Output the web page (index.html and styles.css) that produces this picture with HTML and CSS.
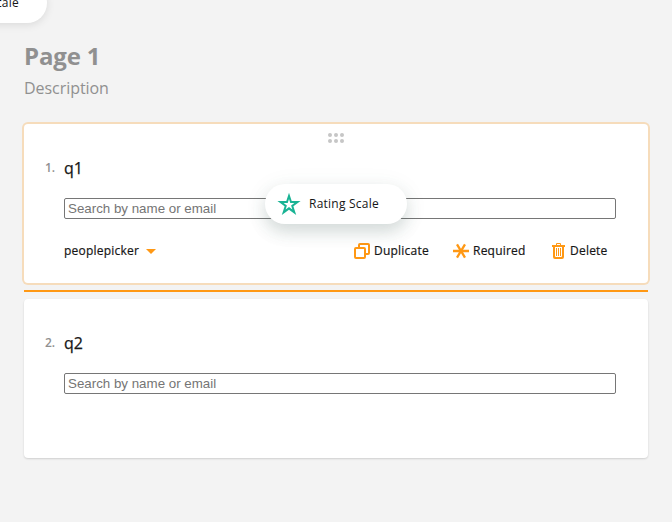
FILE: index.html
```html
<!DOCTYPE html>
<html lang="en">
<head>
<meta charset="utf-8">
<title>Survey designer</title>
<link rel="stylesheet" href="styles.css">
</head>
<body>
<main class="page">
  <h1 class="page-title">Page 1</h1>
  <p class="page-description">Description</p>

  <section class="question question--selected">
    <svg class="drag-handle" width="16" height="10" viewBox="0 0 16 10"><g fill="#c6c6c6"><circle cx="2" cy="2" r="2"/><circle cx="8" cy="2" r="2"/><circle cx="14" cy="2" r="2"/><circle cx="2" cy="8" r="2"/><circle cx="8" cy="8" r="2"/><circle cx="14" cy="8" r="2"/></g></svg>
    <header class="question-header"><span class="number">1.</span><h2 class="question-title">q1</h2></header>
    <input class="picker" type="text" placeholder="Search by name or email">
    <footer class="actions">
      <div class="action action--type"><span>peoplepicker</span><svg width="10" height="5" viewBox="0 0 10 5"><path d="M0 0h10L5 5z" fill="#ff9814"/></svg></div>
      <div class="action action--duplicate"><svg width="16" height="16" viewBox="0 0 16 16" fill="none" stroke="#ff9814" stroke-width="2"><path d="M5 5V2a1 1 0 0 1 1-1h8a1 1 0 0 1 1 1v8a1 1 0 0 1-1 1h-3"/><rect x="1" y="5" width="10" height="10" rx="1"/></svg><span>Duplicate</span></div>
      <div class="action action--required"><svg width="16" height="16" viewBox="0 0 16 16" fill="none" stroke="#ff9814" stroke-width="2.3"><path d="M0 8h16M4 1.4l8 13.2M12 1.4L4 14.6"/></svg><span>Required</span></div>
      <div class="action action--delete"><svg width="13" height="16" viewBox="0 0 13 16" fill="#ff9814"><path fill-rule="evenodd" d="M4 2V1a1 1 0 0 1 1-1h3a1 1 0 0 1 1 1v1h4v2h-1v10a2 2 0 0 1-2 2H3a2 2 0 0 1-2-2V4H0V2zM5 1v1h3V1zM3 4v9a1 1 0 0 0 1 1h5a1 1 0 0 0 1-1V4z"/><path d="M4 5h1v8H4zM6 5h1v8H6zM8 5h1v8H8z"/></svg><span>Delete</span></div>
    </footer>
  </section>

  <div class="drop-line"></div>

  <section class="question">
    <header class="question-header"><span class="number">2.</span><h2 class="question-title">q2</h2></header>
    <input class="picker" type="text" placeholder="Search by name or email">
  </section>
</main>

<div class="chip chip--toolbox">Rating Scale</div>
<div class="chip chip--dragged">
  <svg width="24" height="24" viewBox="0 0 24 24"><path d="M12 .7l2.7 8.3h8.9l-7.2 5.300 2.800 8.700-7.200-5.300L4.800 23l2.800-8.700L.4 9h8.900zM12 7l-1.300 4H6.600l3.300 2.500-1.300 4.100 3.400-2.500 3.400 2.500-1.300-4.100 3.300-2.500h-4.100z" fill="#19b394" fill-rule="evenodd"/></svg>
  <span>Rating Scale</span>
</div>
</body>
</html>
```
FILE: styles.css
```css
* { box-sizing: border-box; }

body {
  margin: 0;
  height: 522px;
  overflow: hidden;
  background: #f3f3f3;
  color: #161616;
  font-family: "Open Sans", sans-serif;
  font-size: 12px;
  line-height: 16px;
}

.page { padding: 40px 24px 0; }

.page-title {
  margin: 0;
  color: #909090;
  font-size: 24px;
  font-weight: 700;
  line-height: 32px;
  letter-spacing: -0.15px;
}

.page-description {
  margin: 4px 0 24px;
  color: #909090;
  font-size: 16px;
  line-height: 24px;
  letter-spacing: -0.05px;
}

.question {
  display: flex;
  flex-direction: column;
  height: 159px;
  padding: 32px 32px 0 20px;
  border-radius: 4px;
  background: #fff;
  box-shadow: 0 1px 2px rgba(0, 0, 0, 0.15);
}

.question--selected {
  padding-top: 9px;
  box-shadow: 0 0 0 2px rgba(255, 152, 20, 0.25);
}

.drag-handle { margin: 0 0 13px 284px; flex: none; }

.question-header {
  display: flex;
  align-items: center;
  height: 24px;
}

.number {
  width: 20px;
  padding-left: 1px;
  color: #909090;
  font-weight: 600;
}

.question-title {
  margin: 0;
  font-size: 16px;
  font-weight: 400;
  line-height: 24px;
  -webkit-text-stroke: 0.25px currentColor;
}

.picker {
  width: 552px;
  height: 21px;
  margin: 18px 0 0 20px;
  padding: 1px 2px 1px 3px;
  border: 1px solid #767676;
  border-radius: 2px;
  font: 13.333px "Liberation Sans", sans-serif;
}

.picker::placeholder { color: #757575; }

.actions {
  display: flex;
  align-items: center;
  height: 16px;
  margin: 24px 8px 0 20px;
}

.action {
  display: flex;
  align-items: center;
  gap: 4px;
  letter-spacing: 0.22px;
  -webkit-text-stroke: 0.2px currentColor;
}

.action--type { width: 92px; justify-content: space-between; margin-right: auto; }
.action--duplicate { width: 76px; }
.action--required { width: 74px; margin-left: 23px; }
.action--delete { width: 56px; margin-left: 25px; gap: 5px; }

.drop-line {
  height: 2px;
  margin: 7px 0;
  background: #ff9814;
}

.chip {
  position: absolute;
  display: flex;
  align-items: center;
  height: 40px;
  border-radius: 20px;
  background: #fff;
  letter-spacing: 0.23px;
}

.chip--toolbox {
  top: -17px;
  right: 625px;
  padding: 0 28px;
  white-space: nowrap;
  box-shadow: 0 2px 8px rgba(0, 0, 0, 0.1);
}

.chip--dragged {
  top: 184px;
  left: 265px;
  width: 142px;
  padding-left: 12px;
  gap: 8px;
  box-shadow: 0 8px 16px rgba(64, 96, 88, 0.18), 0 4px 24px rgba(64, 96, 88, 0.08);
}
```
